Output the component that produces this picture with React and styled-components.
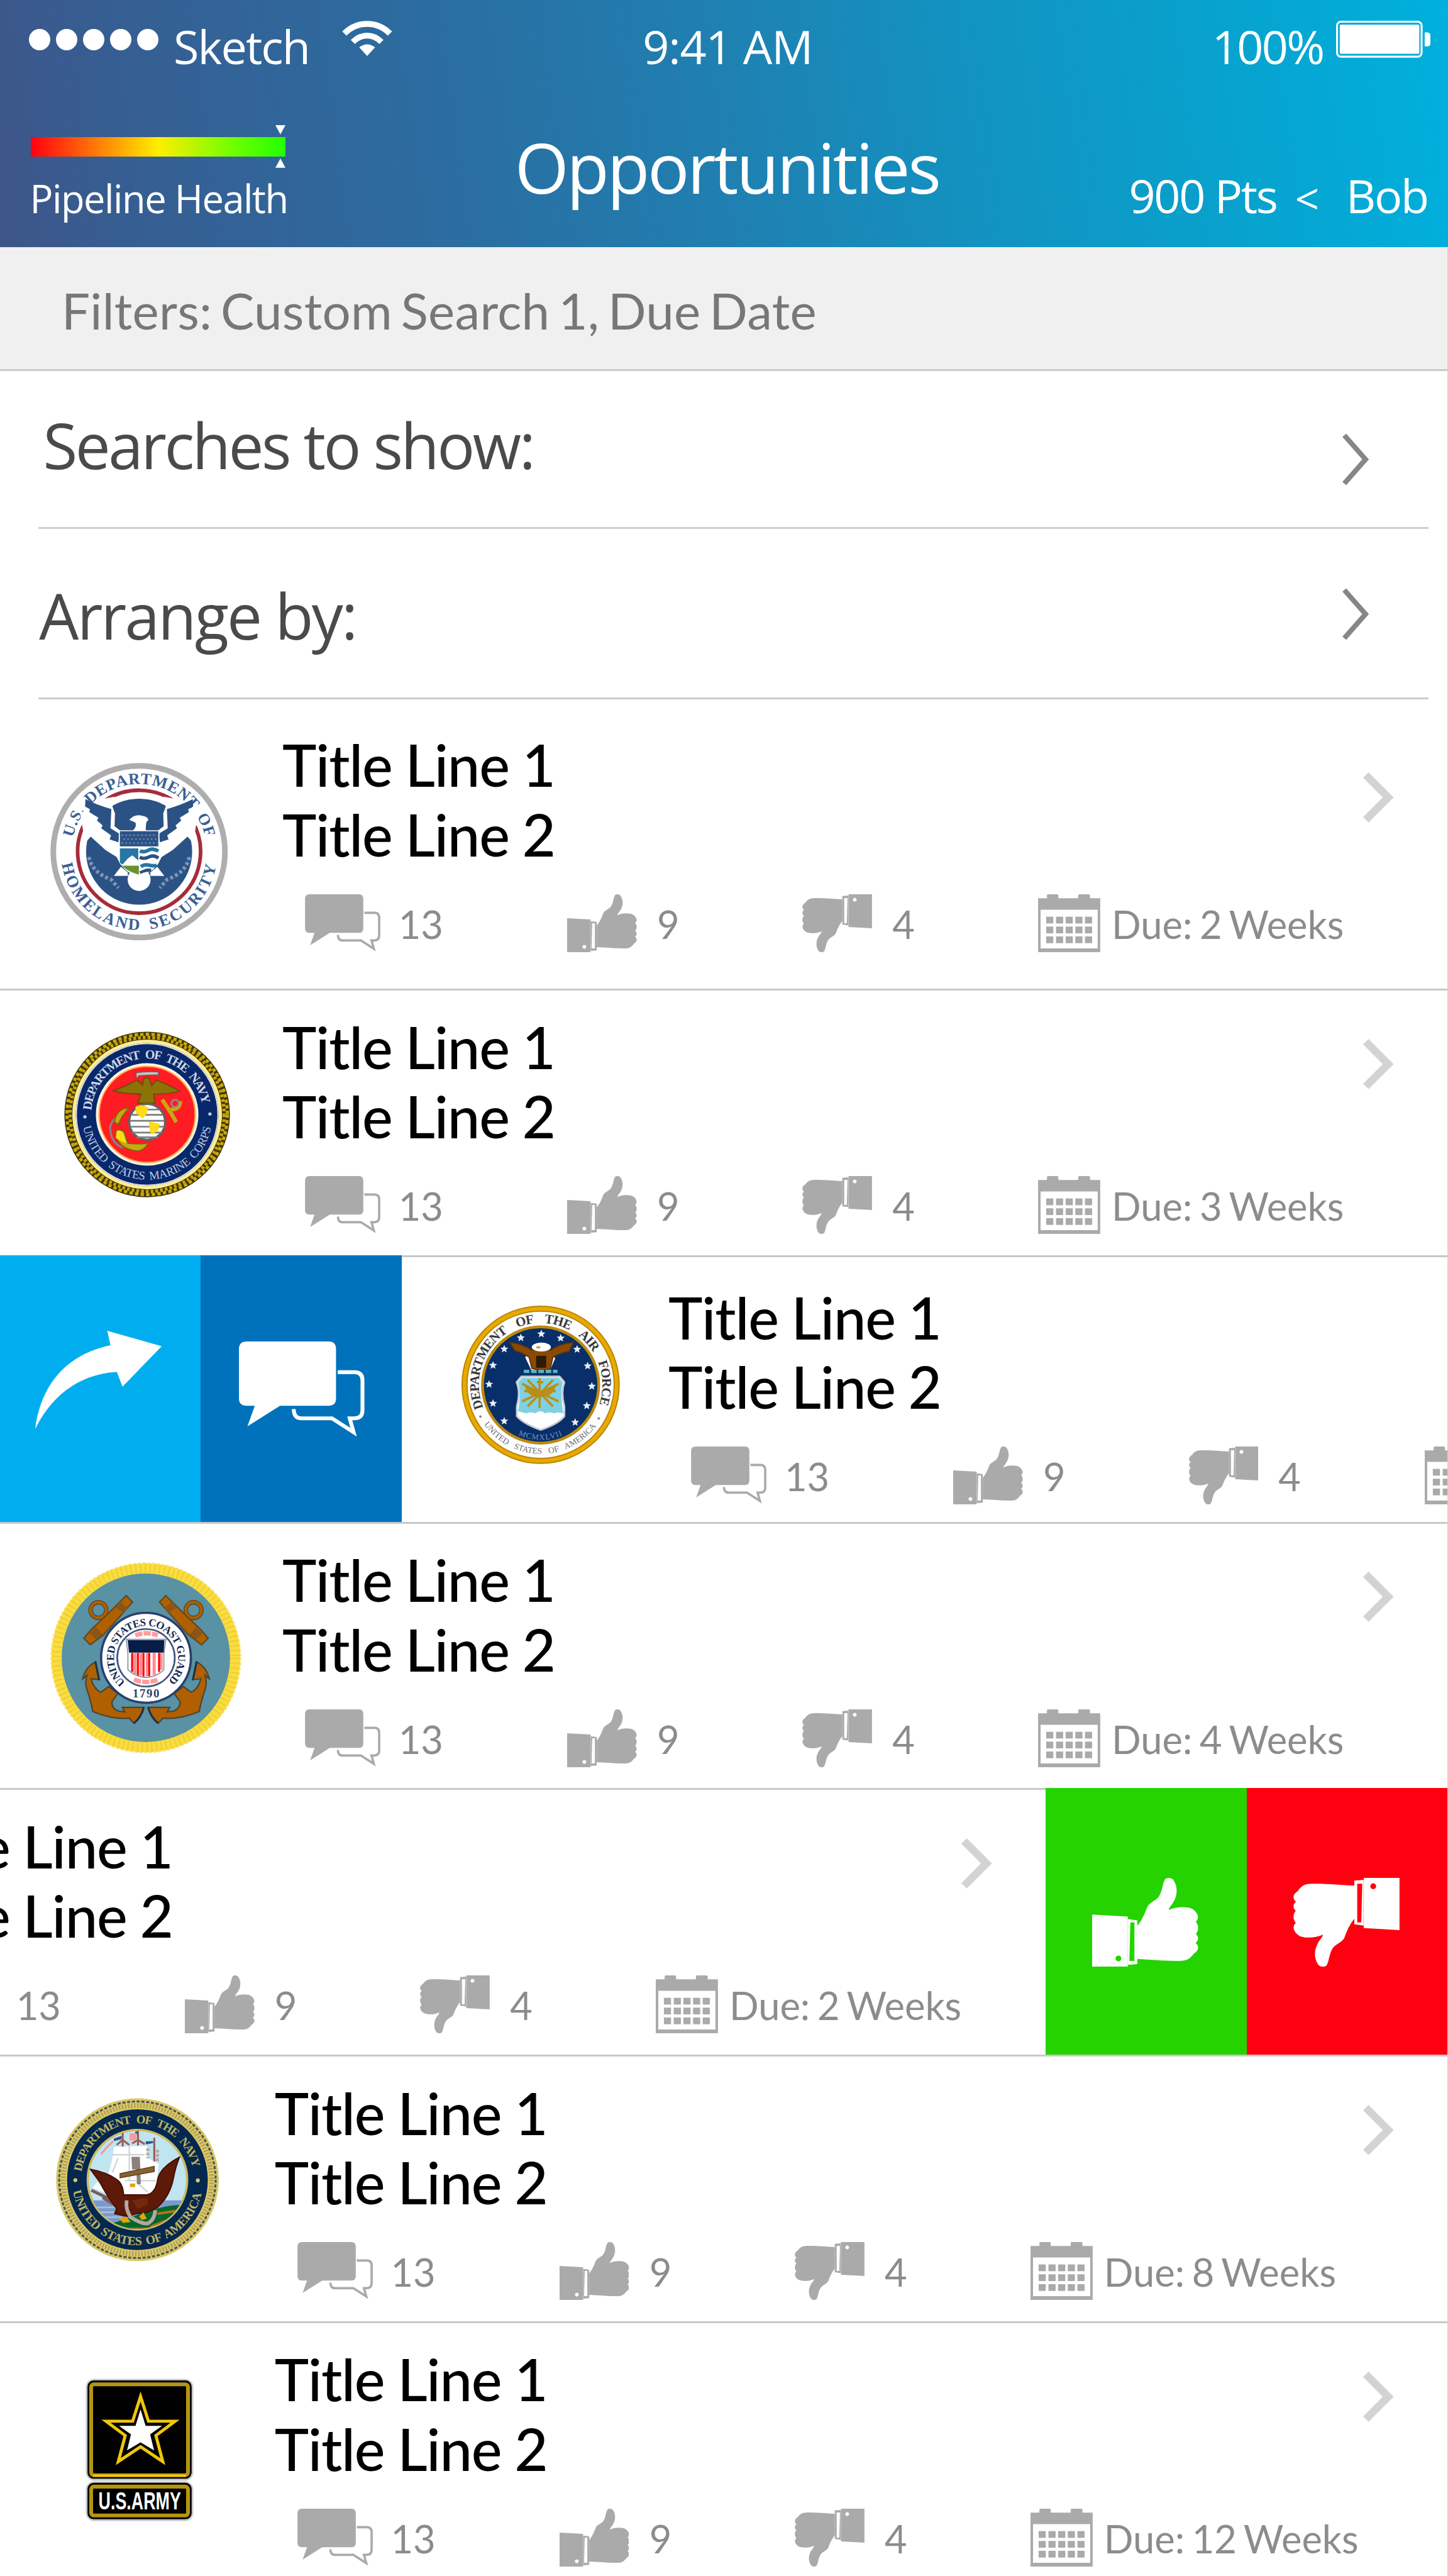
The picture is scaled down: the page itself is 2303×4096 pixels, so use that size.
import React from 'react';
import styled, { createGlobalStyle } from 'styled-components';

/* The screen is designed on a 750-unit wide grid. */
const u = (n) => `${((n * 2303) / 750).toFixed(2)}px`;

const SEGOE = '"Open Sans", "Noto Sans", sans-serif';
const LATO = 'Lato, "Open Sans", sans-serif';

const GlobalStyle = createGlobalStyle`
  html, body { margin: 0; padding: 0; background: #fff; }
  svg { display: block; flex: none; }
`;

const Screen = styled.div`
  width: ${u(750)};
  height: 4096px;
  overflow: hidden;
  background: #fff;
  display: flex;
  flex-direction: column;
`;

/* ---------- header ---------- */

const Header = styled.header`
  flex: none;
  height: ${u(128)};
  box-sizing: border-box;
  color: #fff;
  font-family: ${SEGOE};
  background: linear-gradient(82deg, #3e5588 0%, #375d91 8%, #2c6ca0 30%, #1f80b1 50%, #1293c1 67%, #08a2ce 84%, #00b0dd 100%);
`;

const StatusBar = styled.div`
  display: grid;
  grid-template-columns: 1fr auto 1fr;
  height: ${u(47.4)};
  padding: 0 ${u(9)} 0 ${u(15)};
  font-size: ${u(24)};
  line-height: ${u(48)};
  white-space: nowrap;
`;

const StatusGroup = styled.div`
  display: flex;
  align-items: flex-start;
  justify-content: ${(p) => (p.$end ? 'flex-end' : 'flex-start')};
`;

const StatusText = styled.span`
  letter-spacing: ${(p) => u(p.$ls)};
  margin: 0 ${(p) => u(p.$mr || 0)} 0 ${(p) => u(p.$ml || 0)};
`;

const Dots = styled.div`
  display: flex;
  gap: ${u(3)};
  padding-top: ${u(15)};
`;

const Dot = styled.i`
  width: ${u(11)};
  height: ${u(11)};
  border-radius: 50%;
  background: #fff;
`;

const Wifi = styled.svg`
  width: ${u(26)};
  height: ${u(18.2)};
  margin: ${u(10.9)} 0 0 ${u(17)};
`;

const Battery = styled.svg`
  width: ${u(49)};
  height: ${u(19.1)};
  margin-top: ${u(10.9)};
`;

const NavBar = styled.div`
  display: flex;
  justify-content: space-between;
  padding: 0 ${u(10.5)} 0 ${u(15)};
`;

const Health = styled.div`
  width: ${u(251.6)};
  padding-top: ${u(17.5)};
`;

const Marker = styled.svg`
  width: ${u(5.2)};
  height: ${u(4.8)};
  margin-left: ${u(127.8)};
`;

const HealthBar = styled.div`
  width: ${u(132)};
  height: ${u(10)};
  margin: ${u(1.3)} 0 ${u(1.1)} ${u(1)};
  background: linear-gradient(90deg, #ff0010 0%, #ffee00 50%, #6dff00 80%, #22ff00 100%);
`;

const HealthLabel = styled.div`
  margin: ${u(3.9)} 0 0 ${u(0.5)};
  font-size: ${u(20)};
  line-height: ${u(24)};
  letter-spacing: ${u(-0.49)};
  white-space: nowrap;
`;

const ScreenTitle = styled.h1`
  margin: 0;
  font-weight: 400;
  font-size: ${u(36)};
  line-height: ${u(78.1)};
  letter-spacing: ${u(-1.07)};
`;

const Score = styled.div`
  flex: 1;
  display: flex;
  justify-content: flex-end;
  padding-top: ${u(38.9)};
  font-size: ${u(24)};
  line-height: ${u(30)};
  letter-spacing: ${u(-0.75)};
  white-space: pre;
`;

const ScoreSep = styled.span`
  margin: ${u(1.4)} ${u(14.6)} 0 ${u(9.4)};
  font-size: ${u(22)};
`;

/* ---------- filter and settings ---------- */

const Main = styled.main`
  flex: none;
  box-sizing: border-box;
  width: ${u(750)};
  border-right: 1px solid #d2d2d4;
`;

const FilterBar = styled.div`
  box-sizing: border-box;
  height: ${u(64)};
  padding: ${u(2)} 0 0 ${u(31.9)};
  border-bottom: ${u(1)} solid #cbcbcb;
  background: #f0f0f0;
  color: #777;
  font: 400 ${u(26)} / ${u(61.4)} ${LATO};
  letter-spacing: ${u(0.1)};
  word-spacing: ${u(-2.3)};
`;

const Setting = styled.div`
  display: flex;
  justify-content: space-between;
  box-sizing: border-box;
  height: ${(p) => u(p.$h)};
  margin: 0 ${u(9.7)} 0 ${u(20)};
  padding: 0 ${u(31)} 0 ${(p) => u(p.$indent)};
  border-bottom: ${u(1)} solid #cccdd1;
  color: #4a4a4a;
  font-family: ${SEGOE};
  font-size: ${u(32.5)};
  line-height: ${(p) => u(p.$lh)};
  letter-spacing: ${(p) => u(p.$ls)};
`;

const SettingChevron = styled.svg`
  width: ${u(13.6)};
  height: ${u(27)};
  margin-top: ${(p) => u(p.$top)};
`;

/* ---------- opportunity list ---------- */

const Row = styled.div`
  display: flex;
  justify-content: ${(p) => (p.$end ? 'flex-end' : 'flex-start')};
  height: ${(p) => u(p.$h || 138)};
  overflow: hidden;
`;

const Content = styled.div`
  flex: none;
  display: flex;
  width: ${u(749.7)};
  background: #fff;
  box-shadow: ${(p) => (p.$line ? `inset 0 ${u(1)} #c8c7cc` : 'none')};
`;

const SealSlot = styled.div`
  flex: none;
  box-sizing: border-box;
  width: ${(p) => u(p.$w)};
  padding: ${(p) => u(p.$y)} 0 0 ${(p) => u(p.$x)};
`;

const SealSvg = styled.svg`
  width: ${(p) => u(p.$w)};
  height: ${(p) => u(p.$h)};
`;

const Body = styled.div`
  flex: 1;
  min-width: 0;
  padding-top: ${(p) => u(p.$base - 29.8)};
  font-family: ${LATO};
`;

const Title = styled.div`
  color: #000;
  font-size: ${u(30)};
  font-weight: 500;
  line-height: ${u(36)};
  letter-spacing: ${u(-0.4)};
  word-spacing: ${u(-0.4)};
  white-space: nowrap;
`;

const Stats = styled.div`
  display: flex;
  margin: ${u(12.8)} 0 0 ${u(11.7)};
`;

const Stat = styled.div`
  flex: none;
  display: flex;
  gap: ${(p) => u(p.$gap)};
  width: ${(p) => u(p.$w)};
  color: #8c8c8c;
  font-size: ${u(20)};
  line-height: ${u(31.2)};
  word-spacing: ${u(-1.3)};
  white-space: nowrap;
`;

const Icon = styled.svg`
  width: ${(p) => u(p.$w)};
  height: ${(p) => u(p.$h)};
`;

const RowChevron = styled.svg`
  width: ${u(15.8)};
  height: ${u(26)};
  margin: ${(p) => u(p.$center - 13)} ${u(27.8)} 0 0;
`;

const Action = styled.div`
  flex: none;
  display: flex;
  align-items: center;
  justify-content: center;
  box-sizing: border-box;
  width: ${u(104)};
  padding: ${(p) => p.$pad || '0'};
  background: ${(p) => p.$bg};
`;

/* ---------- icons ---------- */

const CommentIcon = ({ w, h, color }) => (
  <Icon $w={w} $h={h} viewBox="0 0 65 50">
    <path fill={color} d="M4 0H46.5Q50.3 0 50.3 4V29.5Q50.3 33.3 46.5 33.3H21.3L4.4 44L8.2 33.3H4Q0 33.3 0 29.5V4Q0 0 4 0Z" />
    <path fill="none" stroke={color} strokeWidth="2" strokeMiterlimit="10" d="M51.2 15.9H59.8Q64 15.9 64 20V35.6Q64 39.8 59.8 39.8H57.4L59.4 47L48.2 39.8H32.4Q28.4 39.8 28.4 35" />
  </Icon>
);

const ThumbShape = ({ color }) => (
  <>
    <path fill={color} fillRule="evenodd" d="M0 19L18.5 20V46H0ZM13.6 40.2a1.5 1.5 0 1 0 0.01 0Z" />
    <path fill={color} fillRule="evenodd" d="M18.6 21.3L23.4 22V44.6L18.6 45ZM19.8 23H21.9V43H19.3Z" />
    <path
      fill={color}
      d="M23.4 24.8C25.5 22.5 27.5 18 28.4 15.4C29.4 12.6 33 12 34.6 9.6C36.5 6.5 36.3 3.6 37.6 1C38.4 -.4 41.2 -.3 42.2 1.2C44.4 4.5 44.2 8.6 42.4 12C41.4 14 39.9 15 39.7 16.7C42.5 15 49.5 14.4 52.3 16.3C54.8 18.2 55.8 20.7 53.7 22.7C55.3 24.4 55.3 27.3 53.7 29C55.3 30.4 55.3 32.3 53.6 33.6C55.6 35.3 55.3 37.6 52.7 39.2C51.2 41.2 49.8 42.8 46.5 42.9C38 43.2 31 42.2 23.4 42Z"
    />
  </>
);

const ThumbUp = ({ w, h, color }) => (
  <Icon $w={w} $h={h} viewBox="0 0 55 46" preserveAspectRatio="none">
    <ThumbShape color={color} />
  </Icon>
);

const ThumbDown = ({ w, h, color }) => (
  <Icon $w={w} $h={h} viewBox="0 0 55 46" preserveAspectRatio="none">
    <g transform="rotate(180 27.5 23)">
      <ThumbShape color={color} />
    </g>
  </Icon>
);

const CalendarIcon = () => (
  <Icon $w={32.2} $h={30} viewBox="0 0 32.2 30">
    <path fill="#aaa" d="M0 2H4.6V0.6Q4.6 0 5.2 0H9.8Q10.5 0 10.5 0.6V2H20.8V0.6Q20.8 0 21.4 0H26.2Q26.9 0 26.9 0.6V2H32.2V30H0ZM1.3 8V28H30.9V8Z" fillRule="evenodd" />
    {[11.6, 16.7, 21.8].map((y) =>
      [4.2, 9.3, 14.3, 19.3, 24.3].map((x) => <rect key={`${x}-${y}`} x={x} y={y} width="3.7" height="3.5" fill="#aaa" />)
    )}
  </Icon>
);

const ShareIcon = () => (
  <Icon $w={65.5} $h={50.9} viewBox="0 0 65.5 50.9">
    <path fill="#fff" d="M65.5 8L37.3 0L39 7.5C20 11.5 3.5 24 0 50.9C7.5 35.5 21 22.5 42.3 21.3L45.2 29Z" />
  </Icon>
);

/* ---------- seals ---------- */

const at = (cx, cy, r, deg) => {
  const a = (deg * Math.PI) / 180;
  return `${(cx + r * Math.sin(a)).toFixed(1)} ${(cy - r * Math.cos(a)).toFixed(1)}`;
};

const arc = (cx, cy, r, from, to) => {
  const span = Math.abs(to - from);
  return `M${at(cx, cy, r, from)}A${r} ${r} 0 ${span > 180 ? 1 : 0} ${to > from ? 1 : 0} ${at(cx, cy, r, to)}`;
};

const ArcText = ({ id, cx, cy, r, from, to, size, color, gap = 0, weight = 400, family = '"Liberation Serif", serif', children }) => {
  const len = ((Math.abs(to - from) * Math.PI * r) / 180 * 0.985).toFixed(0);
  return (
    <>
      <path id={id} d={arc(cx, cy, r, from, to)} fill="none" />
      <text fontSize={size} fontWeight={weight} fontFamily={family} fill={color} wordSpacing={gap} textLength={len}>
        <textPath href={`#${id}`} textLength={len}>{children}</textPath>
      </text>
    </>
  );
};

const Mirror = ({ x, children }) => (
  <>
    <g>{children}</g>
    <g transform={`translate(${2 * x} 0) scale(-1 1)`}>{children}</g>
  </>
);

const HomelandSeal = () => (
  <SealSvg $w={92} $h={92} viewBox="87 119 1266 1266">
    <circle cx="720" cy="752" r="612" fill="#fff" stroke="#aeaeae" strokeWidth="40" />
    <ArcText id="dhs-t" cx={720} cy={752} r={482} from={-78} to={80} size={114} gap={20} weight={700} color="#3b6094">U.S. DEPARTMENT OF</ArcText>
    <ArcText id="dhs-b" cx={720} cy={752} r={558} from={261} to={98} size={116} gap={20} weight={700} color="#3b6094">HOMELAND SECURITY</ArcText>
    <path d={arc(720, 752, 438, 60, 302)} fill="none" stroke="#a52c3a" strokeWidth="26" />
    <path d={arc(720, 752, 438, -37, 39)} fill="none" stroke="#a52c3a" strokeWidth="26" />
    <circle cx="720" cy="752" r="378" fill="#2b5285" />
    <Mirror x={720}>
      <path fill="#fff" d="M300 480L440 380L545 360L530 430L548 480L545 570L590 605V850L560 790L480 740L375 645L335 690Z" />
      <path fill="#2b5285" d="M338 378Q420 420 522 448L516 585L582 625L572 685L510 665L520 635L450 585L460 565L420 530L430 510L365 470L370 450L335 430Z" />
      <path fill="none" stroke="#7d95b6" strokeWidth="26" strokeDasharray="22 16" d="M362 790Q385 900 520 950L572 1010" />
      <path fill="#fff" d="M540 925L590 860L640 900V925Z" />
    </Mirror>
    <path fill="#fff" d="M650 525Q680 490 720 492Q790 500 785 530Q765 530 768 605H672Q706 575 694 545Z" />
    <path fill="#fff" d="M575 600H865V800Q850 890 720 930Q590 890 575 800Z" />
    <rect x="583" y="606" width="274" height="108" fill="#2b5285" />
    <path stroke="#6f8bb0" strokeWidth="11" strokeDasharray="11 17" d="M595 634H850M608 662H850M595 690H850" />
    <path fill="#2876a5" d="M583 728H714V842H597L583 830Z" />
    <path fill="#fff" d="M597 850L640 800L672 778L714 815V850Z" />
    <path fill="none" stroke="#2876a5" strokeWidth="26" d="M726 745Q750 760 785 742T857 748M732 858Q760 840 790 848T845 850" />
    <path fill="none" stroke="#2b5285" strokeWidth="24" d="M724 792Q755 808 790 790T857 798M724 902Q760 880 805 884" />
    <circle cx="720" cy="950" r="82" fill="#fff" />
    <path fill="#66942e" d="M597 852H718V916Q640 895 597 852Z" />
    <path fill="none" stroke="#2b5285" strokeWidth="20" d="M726 902Q760 882 805 884" />
  </SealSvg>
);

const MarineSeal = () => (
  <SealSvg $w={86} $h={86} viewBox="92 84 1182 1182">
    <circle cx="683" cy="675" r="560" fill="#fff" stroke="#3d3504" strokeWidth="58" />
    <circle cx="683" cy="675" r="571" fill="none" stroke="#cba90c" strokeWidth="22" strokeDasharray="24 16" />
    <circle cx="683" cy="675" r="548" fill="none" stroke="#c4a20c" strokeWidth="24" strokeDasharray="20 14" />
    <circle cx="683" cy="675" r="520" fill="#08286b" stroke="#ffec94" strokeWidth="24" />
    <circle cx="683" cy="675" r="504" fill="none" stroke="#e4e4ea" strokeWidth="8" />
    <ArcText id="usmc-t" cx={683} cy={675} r={398} from={-86} to={82} size={90} gap={26} weight={700} color="#cfd6e6">DEPARTMENT OF THE NAVY</ArcText>
    <ArcText id="usmc-b" cx={683} cy={675} r={464} from={259} to={99} size={84} gap={16} color="#c0cae0">UNITED STATES MARINE CORPS</ArcText>
    <circle cx="240" cy="692" r="12" fill="#c0cae0" />
    <circle cx="1130" cy="672" r="12" fill="#c0cae0" />
    <circle cx="683" cy="675" r="352" fill="#ff1c22" stroke="#fff3e0" strokeWidth="26" />
    <circle cx="683" cy="675" r="342" fill="none" stroke="#ffa64a" strokeWidth="10" />
    <path fill="#c9c3c3" stroke="#8a5050" strokeWidth="8" d="M604 378Q680 366 764 372V394Q690 396 622 400V412H604Z" />
    <path fill="#8c7308" stroke="#6a4c08" strokeWidth="8" d="M442 508Q540 470 610 430L650 465L655 425Q680 400 700 425L715 470L750 430Q830 460 915 508Q850 530 730 530L740 595H615L640 530Q520 530 442 508Z" />
    <path fill="none" stroke="#8b8383" strokeWidth="14" d="M545 640Q440 690 420 760Q420 880 510 912" />
    <path fill="#c8a811" stroke="#7c6410" strokeWidth="8" d="M550 625Q460 640 450 730L480 745Q500 690 520 670ZM455 800Q490 770 520 800L545 880Q620 890 690 880Q660 935 610 935Q470 920 455 800Z" />
    <path fill="#ffdc18" d="M470 790Q500 785 515 815L535 880Q480 860 460 840Z" />
    <circle cx="683" cy="728" r="128" fill="#fff" stroke="#626262" strokeWidth="16" />
    <path stroke="#7c7c7c" strokeWidth="12" d="M600 640H770M575 678H795M560 720H806M560 762H806M572 804H790M605 838H760" />
    <path fill="#ffdc18" d="M600 620Q640 595 690 625L680 670L650 705L600 660ZM695 725L775 742L760 790L715 820L700 780Z" />
    <path fill="none" stroke="#c8a811" strokeWidth="28" d="M790 570L850 660L890 730M850 640Q920 640 918 580" />
    <circle cx="882" cy="596" r="26" fill="none" stroke="#8f8f8f" strokeWidth="12" />
  </SealSvg>
);

const AF_STARS = [[677, 284], [531, 312], [815, 314], [413, 392], [932, 394], [333, 508], [1007, 512], [305, 643], [1037, 657], [333, 779], [1001, 796], [413, 905], [918, 914]];

const starPath = (cx, cy, R, k = 0.382) =>
  'M' + Array.from({ length: 10 }, (_, i) => at(cx, cy, i % 2 ? R * k : R, i * 36)).join('L') + 'Z';

const AirForceSeal = () => (
  <SealSvg $w={82.6} $h={82.6} viewBox="104 78 1136 1136">
    <circle cx="672" cy="646" r="542" fill="#fff" stroke="#b98600" strokeWidth="44" />
    <circle cx="672" cy="646" r="542" fill="none" stroke="#eaa900" strokeWidth="26" />
    <ArcText id="af-t" cx={672} cy={646} r={440} from={-112} to={112} size={94} gap={62} weight={700} color="#3a3a3a">DEPARTMENT OF THE AIR FORCE</ArcText>
    <ArcText id="af-b" cx={672} cy={646} r={492} from={235} to={125} size={60} gap={34} color="#6d6d6d">UNITED STATES OF AMERICA</ArcText>
    <circle cx="243" cy="873" r="9" fill="#888" />
    <circle cx="1086" cy="886" r="9" fill="#888" />
    <circle cx="672" cy="648" r="414" fill="#082f69" stroke="#bd8a0c" strokeWidth="20" />
    {AF_STARS.map(([x, y]) => (
      <path key={`${x}-${y}`} d={starPath(x, y, 30, 0.45)} fill="#e8edf5" />
    ))}
    <path fill="#fff" d="M562 450L600 400H745L775 460L740 540H605Z" />
    <path fill="#8a4a05" stroke="#5b3208" strokeWidth="8" d="M450 345Q540 352 610 400H745Q810 350 905 345L875 410Q820 415 760 450L740 535Q680 550 610 530L590 450Q540 415 490 405Z" />
    <path fill="#2e1a05" d="M640 440H712V525H640Z" />
    <ellipse cx="677" cy="378" rx="68" ry="32" fill="#fff" />
    <rect x="642" y="372" width="28" height="16" fill="#c9a34a" />
    <path stroke="#5fb0c0" strokeWidth="24" strokeDasharray="40 12" d="M552 551H792" />
    <path fill="#fff" stroke="#c5c8d0" strokeWidth="12" d="M535 587H808L842 628Q815 700 842 800V870Q800 925 672 968Q550 925 502 870V800Q530 700 500 628Z" />
    <path fill="#7fd0e3" d="M540 597H803L830 630Q810 700 833 850Q790 835 772 850Q730 835 704 850Q670 820 636 850Q600 835 568 850L512 835Q535 700 512 630Z" />
    <path stroke="#b98f1c" strokeWidth="16" fill="none" d="M665 600V812M580 612L760 800M760 612L580 800M540 640L800 765M800 640L540 765M555 690L665 705L780 690M645 628H690" />
    <path fill="#b98f1c" d="M560 655Q620 690 665 690Q710 690 780 655Q760 735 665 735Q580 735 560 655Z" />
    <ArcText id="af-y" cx={672} cy={646} r={392} from={204} to={156} size={56} color="#8295b8">MCMXLVII</ArcText>
  </SealSvg>
);

const CoastGuardSeal = () => (
  <SealSvg $w={99} $h={99} viewBox="59 84 1362 1362">
    <circle cx="740" cy="765" r="637" fill="#5991a5" stroke="#fcdd3c" strokeWidth="74" />
    <circle cx="740" cy="765" r="637" fill="none" stroke="#e9cf3c" strokeWidth="66" strokeDasharray="10 24" />
    <circle cx="740" cy="765" r="676" fill="none" stroke="#f6e27a" strokeWidth="8" strokeDasharray="20 14" />
    <Mirror x={741}>
      <circle cx="402" cy="425" r="56" fill="none" stroke="#5e4a25" strokeWidth="32" />
      <circle cx="402" cy="425" r="56" fill="none" stroke="#b06000" strokeWidth="18" />
      <path fill="#b06000" stroke="#5e4a25" strokeWidth="10" d="M600 322L645 368L590 430L440 600L345 672L298 626L350 565L480 440Z" />
      <path fill="#8a5516" d="M552 365L610 410L580 445L525 405ZM385 545L430 600L385 635L340 590Z" />
      <path fill="#b06000" stroke="#4d4432" strokeWidth="10" d="M380 795L405 920L350 915Q370 990 420 1010L475 970L540 1020L500 1075Q490 1120 545 1145L590 1150L572 1118H725Q705 1190 655 1232L620 1195Q500 1205 362 1148Q345 1060 318 985Q305 940 320 890L290 915Q310 830 380 795Z" />
      <path stroke="#1d3148" strokeWidth="14" fill="none" d="M380 790L408 925M726 1118Q706 1190 656 1230" />
    </Mirror>
    <circle cx="741" cy="765" r="320" fill="#fff" stroke="#27406c" strokeWidth="16" />
    <ArcText id="cg-t" cx={741} cy={765} r={228} from={-140} to={140} size={76} weight={700} color="#14294f">UNITED STATES COAST GUARD</ArcText>
    <text x="741" y="1046" fontSize="84" fontWeight="700" fontFamily='"Liberation Serif", serif' fill="#2c4068" textAnchor="middle" textLength="190">1790</text>
    <circle cx="741" cy="765" r="205" fill="#fff" stroke="#40557c" strokeWidth="12" />
    <path d="M665 605Q741 575 825 605M655 920Q741 955 830 920" fill="none" stroke="#ff9d9d" strokeWidth="32" strokeDasharray="52 8" />
    <path fill="#fff" stroke="#8c96aa" strokeWidth="8" d="M600 634H882L868 735V850Q820 900 740 905Q660 900 612 850V735Z" />
    <path fill="#071d48" d="M610 640H872L867 728H620Z" />
    <path stroke="#ff4545" strokeWidth="22" fill="none" d="M662 730V880M704 730V892M750 730V896M799 730V888M848 730V850" strokeOpacity="0.6" />
    <path stroke="#ff0000" strokeWidth="14" fill="none" d="M642 730V866M683 730V892M723 730V898M764 730V896M834 730V866" />
  </SealSvg>
);

const NavySeal = () => (
  <SealSvg $w={84.4} $h={84.6} viewBox="68 92 1160 1162">
    <circle cx="648" cy="673" r="540" fill="#04284f" stroke="#dcc766" strokeWidth="78" />
    <circle cx="648" cy="673" r="557" fill="none" stroke="#47594f" strokeWidth="14" strokeDasharray="22 12" />
    <circle cx="648" cy="673" r="528" fill="none" stroke="#a79c58" strokeWidth="34" strokeDasharray="9 13" />
    <ArcText id="navy-t" cx={648} cy={673} r={402} from={-82} to={80} size={84} gap={26} weight={700} color="#c0b566">DEPARTMENT OF THE NAVY</ArcText>
    <ArcText id="navy-b" cx={648} cy={673} r={466} from={260} to={100} size={88} gap={14} weight={700} color="#c0b566">UNITED STATES OF AMERICA</ArcText>
    <circle cx="206" cy="676" r="14" fill="#dcc766" />
    <circle cx="1078" cy="678" r="14" fill="#dcc766" />
    <clipPath id="navy-in">
      <circle cx="648" cy="673" r="350" />
    </clipPath>
    <circle cx="648" cy="673" r="354" fill="#c0e5f0" stroke="#cdbb62" strokeWidth="16" />
    <g clipPath="url(#navy-in)">
      <rect x="290" y="820" width="720" height="220" fill="#7b9acb" />
      <path stroke="#a9bfe2" strokeWidth="12" d="M300 870H520M300 905H520M300 940H540" />
      <path fill="#06672c" d="M480 1040V980Q620 930 760 890Q850 850 1010 850V1040Z" />
      <path stroke="#b0761a" strokeWidth="18" fill="none" d="M790 915L920 895M740 1010L850 965M600 1024H720" />
      <path stroke="#94605a" strokeWidth="14" d="M543 340V440M652 320V430M768 375V545M500 425L543 390L590 425M610 415L652 390L700 420" fill="none" />
      <path fill="#2f5288" d="M480 380L535 360V385L480 398ZM632 330H648V350H632ZM705 400L760 398V412L710 422Z" />
      <path stroke="#ec9aa0" strokeWidth="14" d="M475 400L432 440L388 492" fill="none" />
      <rect x="592" y="342" width="50" height="52" fill="#f79aa2" />
      <path fill="#fff" d="M480 440L715 432L725 520L800 560L790 640L830 760L720 790H560L440 640L470 520ZM330 730L360 690L450 780Z" />
      <path fill="none" stroke="#cfd3d6" strokeWidth="10" d="M468 495H700M590 430V680M510 520L470 620M560 680H780M640 690L720 760" />
      <path stroke="#b5a8a6" strokeWidth="22" strokeDasharray="20 10" d="M722 450V520M790 460V550" />
      <path fill="#8b807c" d="M605 510H665L672 705H645L640 600H610Z" />
      <path fill="#8a6030" stroke="#5c3e18" strokeWidth="6" d="M524 630L768 578V615L524 660Z" />
      <path stroke="#7d5a5a" strokeWidth="22" d="M320 748L470 820M400 800L500 860" />
      <path fill="#5e1a08" stroke="#3d0d02" strokeWidth="8" d="M312 598Q430 620 500 670Q545 700 550 780H715Q775 770 790 680Q800 590 948 512Q920 580 905 660Q880 790 790 870Q720 915 640 915L575 935L485 915L500 880Q430 790 380 690Z" />
      <path fill="#7c3012" opacity="0.7" d="M610 820L720 800V850L650 880Z" />
      <path fill="#e0a50a" d="M520 950L570 935L600 975L545 980ZM660 935L690 905L715 950L680 960ZM595 700H632V725H595Z" />
      <path fill="none" stroke="#b3a8a4" strokeWidth="26" d="M572 820Q560 880 600 940Q680 990 720 985Q770 960 775 890" />
    </g>
  </SealSvg>
);

const ArmySeal = () => (
  <SealSvg $w={56} $h={74} viewBox="96 80 768 1018" preserveAspectRatio="none">
    <rect x="98" y="82" width="764" height="726" rx="60" fill="#c9c9c9" />
    <rect x="98" y="812" width="764" height="284" rx="60" fill="#c9c9c9" />
    <rect x="110" y="94" width="740" height="700" rx="44" fill="#000" />
    <rect x="136" y="121" width="688" height="648" rx="20" fill="none" stroke="#b5960e" strokeWidth="27" />
    <path d="M150 772H810" stroke="#f0c810" strokeWidth="16" />
    <rect x="110" y="823" width="740" height="260" rx="44" fill="#000" />
    <rect x="136" y="850" width="688" height="206" rx="20" fill="none" stroke="#b5960e" strokeWidth="27" />
    <path d="M487 208L543 384H732L596 486L645 672L487 566L329 672L378 486L242 384H431Z" fill="none" stroke="#efc60d" strokeWidth="22" strokeMiterlimit="10" />
    <path d="M487 300L523 417H640L555 478L583 592L487 535L391 592L419 478L334 417H451Z" fill="#fff" />
    <text x="188" y="1014" fontSize="178" fontWeight="700" fontFamily='"Liberation Sans Narrow", "Liberation Sans", sans-serif' fill="#fff" textLength="586" lengthAdjust="spacingAndGlyphs">U.S.ARMY</text>
  </SealSvg>
);

/* ---------- rows ---------- */

const Opportunity = ({ seal: Seal, sealX, sealY, textX = 146.2, base = 42, center = 39, due, line = true }) => (
  <Content $line={line}>
    <SealSlot $w={textX} $x={sealX || 0} $y={sealY || 0}>{Seal && <Seal />}</SealSlot>
    <Body $base={base}>
      <Title>Title Line 1</Title>
      <Title>Title Line 2</Title>
      <Stats>
        <Stat $w={135.8} $gap={9.4}><CommentIcon w={39.1} h={30} color="#aaa" />13</Stat>
        <Stat $w={122} $gap={10.5}><ThumbUp w={36.1} h={30} color="#aaa" />9</Stat>
        <Stat $w={122.1} $gap={10.4}><ThumbDown w={36.1} h={30} color="#aaa" />4</Stat>
        <Stat $w={160} $gap={5.8}><CalendarIcon />{due}</Stat>
      </Stats>
    </Body>
    <RowChevron $center={center} viewBox="0 0 15.8 26">
      <path d="M1.4 1.4L13 13L1.4 24.6" fill="none" stroke="#d3d3d3" strokeWidth="4" />
    </RowChevron>
  </Content>
);

const Chevron = ({ top }) => (
  <SettingChevron $top={top} viewBox="0 0 13.6 27">
    <path d="M1 1L12 13.5L1 26" fill="none" stroke="#868686" strokeWidth="2.6" />
  </SettingChevron>
);

export default function App() {
  return (
    <Screen>
      <GlobalStyle />
      <Header>
        <StatusBar>
          <StatusGroup>
            <Dots><Dot /><Dot /><Dot /><Dot /><Dot /></Dots>
            <StatusText $ls={-0.6} $ml={7.9}>Sketch</StatusText>
            <Wifi viewBox="0 0 26 18.2">
              <path fill="none" stroke="#fff" strokeWidth="3.1" d="M1.2 6.6Q6.2 1.6 13 1.6T24.8 6.6" />
              <path fill="none" stroke="#fff" strokeWidth="3" d="M5.6 11Q8.8 7.7 13 7.7T20.4 11" />
              <path fill="#fff" d="M13 18.2L8.9 13.8Q13 10.6 17.1 13.8Z" />
            </Wifi>
          </StatusGroup>
          <StatusText $ls={-0.35} $mr={2.2}>9:41 AM</StatusText>
          <StatusGroup $end>
            <StatusText $ls={-0.85} $mr={6.6}>100%</StatusText>
            <Battery viewBox="0 0 49 19.1">
              <rect x="0.5" y="0.5" width="43.8" height="18.1" rx="2" fill="none" stroke="#fff" strokeWidth="1" />
              <rect x="1.9" y="2" width="41.2" height="15.1" rx="0.6" fill="#fff" />
              <path fill="#fff" d="M45.9 6H47.5Q49 6.4 49 8V11.4Q49 13 47.5 13.3H45.9Z" />
            </Battery>
          </StatusGroup>
        </StatusBar>
        <NavBar>
          <Health>
            <Marker viewBox="0 0 5.2 4.8"><path fill="#fff" d="M0 0H5.2L2.6 4.8Z" /></Marker>
            <HealthBar />
            <Marker viewBox="0 0 5.2 4.8"><path fill="#fff" d="M0 4.8H5.2L2.6 0Z" /></Marker>
            <HealthLabel>Pipeline Health</HealthLabel>
          </Health>
          <ScreenTitle>Opportunities</ScreenTitle>
          <Score>
            <span>900 Pts</span>
            <ScoreSep>&lt;</ScoreSep>
            <span>Bob</span>
          </Score>
        </NavBar>
      </Header>

      <Main>
        <FilterBar>Filters: Custom Search 1, Due Date</FilterBar>

        <Setting $h={82} $indent={2.3} $lh={76.6} $ls={-1.14}>
          Searches to show:
          <Chevron top={32.5} />
        </Setting>
        <Setting $h={88} $indent={0.3} $lh={89.6} $ls={-0.91}>
          Arrange by:
          <Chevron top={30.5} />
        </Setting>

        <Row $h={150}>
          <Opportunity seal={HomelandSeal} sealX={26} sealY={33} base={46} center={51} due="Due: 2 Weeks" line={false} />
        </Row>
        <Row>
          <Opportunity seal={MarineSeal} sealX={33.2} sealY={22} due="Due: 3 Weeks" />
        </Row>
        <Row>
          <Action $bg="#00aeef" $pad={`0 ${u(1.8)} ${u(9.2)} 0`}><ShareIcon /></Action>
          <Action $bg="#0072bc" $pad={`${u(1.6)} 0 0 ${u(0.8)}`}><CommentIcon w={65} h={50} color="#fff" /></Action>
          <Opportunity seal={AirForceSeal} sealX={30.8} sealY={25.8} textX={138.2} base={44} due="Due: 3 Weeks" />
        </Row>
        <Row>
          <Opportunity seal={CoastGuardSeal} sealX={26} sealY={21} due="Due: 4 Weeks" />
        </Row>
        <Row $end>
          <Opportunity textX={156.2} due="Due: 2 Weeks" />
          <Action $bg="#24d300" $pad={`${u(1)} ${u(0.8)} 0 0`}><ThumbUp w={55} h={46} color="#fff" /></Action>
          <Action $bg="#ff0010" $pad={`${u(1)} ${u(0.8)} 0 0`}><ThumbDown w={55} h={46} color="#fff" /></Action>
        </Row>
        <Row>
          <Opportunity seal={NavySeal} sealX={29} sealY={22.4} textX={142.2} due="Due: 8 Weeks" />
        </Row>
        <Row>
          <Opportunity seal={ArmySeal} sealX={44.2} sealY={29.8} textX={142.2} due="Due: 12 Weeks" />
        </Row>
      </Main>
    </Screen>
  );
}
